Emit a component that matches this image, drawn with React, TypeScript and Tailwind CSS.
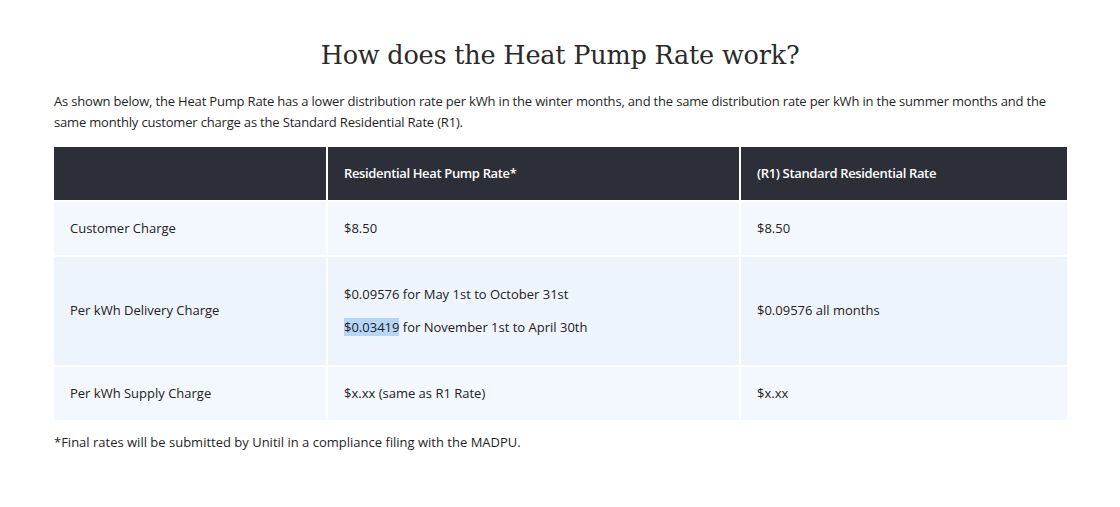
export default function App() {
  const cell = "px-4 align-middle border-2 border-white";
  return (
    <div className="w-[1120px] h-[507px] bg-white text-[#222] font-['Open_Sans',sans-serif]">
      <div className="px-[54px] pt-[36px]">
        <h1 className="text-center text-[25.5px] leading-[38px] text-[#2a2a2a] font-['DejaVu_Serif',serif] tracking-[-0.2px]">
          How does the Heat Pump Rate work?
        </h1>
        <p className="mt-[17px] text-[13px] leading-[21px] tracking-[-0.18px] text-[#1f1f1f]">
          As shown below, the Heat Pump Rate has a lower distribution rate per kWh in the winter months, and the same distribution rate per kWh in the summer months and the same monthly customer charge as the Standard Residential Rate (R1).
        </p>
        <table className="mt-[12px] w-[1017px] -ml-[2px] border-collapse text-[13px] text-[#222]">
          <thead>
            <tr className="bg-[#2c2f38] text-white h-[55px] tracking-[-0.35px]">
              <th className={`${cell} w-[274px] text-left font-semibold`}></th>
              <th className={`${cell} w-[413px] text-left font-semibold`}>Residential Heat Pump Rate*</th>
              <th className={`${cell} text-left font-semibold`}>(R1) Standard Residential Rate</th>
            </tr>
          </thead>
          <tbody>
            <tr className="bg-[#f3f8fe] h-[55px]">
              <td className={cell}>Customer Charge</td>
              <td className={cell}>$8.50</td>
              <td className={cell}>$8.50</td>
            </tr>
            <tr className="bg-[#eef4fc] h-[110px]">
              <td className={cell}>Per kWh Delivery Charge</td>
              <td className={cell}>
                <div className="flex flex-col gap-[14px]">
                  <span>$0.09576 for May 1st to October 31st</span>
                  <span>
                    <span className="bg-[#b7d6f7]">$0.03419</span> for November 1st to April 30th
                  </span>
                </div>
              </td>
              <td className={cell}>$0.09576 all months</td>
            </tr>
            <tr className="bg-[#f3f8fe] h-[55px]">
              <td className={cell}>Per kWh Supply Charge</td>
              <td className={cell}>$x.xx (same as R1 Rate)</td>
              <td className={cell}>$x.xx</td>
            </tr>
          </tbody>
        </table>
        <p className="mt-[10px] text-[13px] leading-[21px] text-[#1f1f1f]">
          *Final rates will be submitted by Unitil in a compliance filing with the MADPU.
        </p>
      </div>
    </div>
  );
}
